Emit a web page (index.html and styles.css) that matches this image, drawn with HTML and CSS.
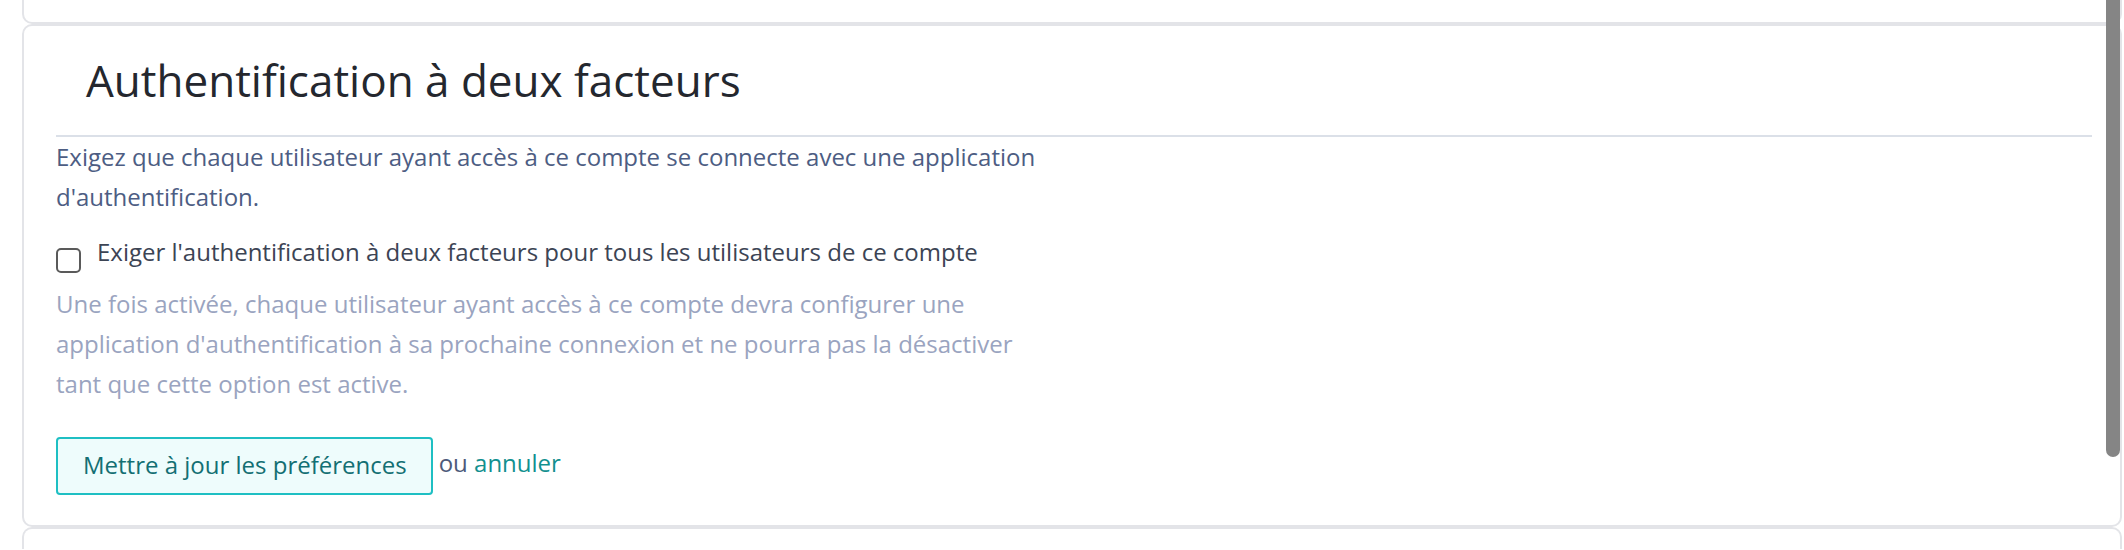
FILE: index.html
```html
<!DOCTYPE html>
<html lang="fr">

<head>
    <meta charset="UTF-8">
    <meta name="viewport" content="width=device-width, initial-scale=1.0">
    <title>Authentification à deux facteurs</title>
    <link rel="stylesheet" href="styles.css">
</head>

<body>

    <div class="page">
        <!-- end of the previous section -->
        <div class="card card-prev"></div>

        <!-- Two factor section -->
        <form class="card" onsubmit="return false">
            <h2 class="card-title">Authentification à deux facteurs</h2>
            <hr class="divider">

            <p class="desc">Exigez que chaque utilisateur ayant accès à ce compte se connecte avec une application d'authentification.</p>

            <div class="check-row">
                <input type="checkbox" id="require-2fa" class="checkbox">
                <label for="require-2fa" class="check-label">Exiger l'authentification à deux facteurs pour tous les utilisateurs de ce compte</label>
            </div>

            <p class="help">Une fois activée, chaque utilisateur ayant accès à ce compte devra configurer une application d'authentification à sa prochaine connexion et ne pourra pas la désactiver tant que cette option est active.</p>

            <div class="actions">
                <button type="submit" class="btn">Mettre à jour les préférences</button>
                <span class="or">ou <a href="#" class="cancel">annuler</a></span>
            </div>
        </form>

        <!-- start of the next section -->
        <div class="card card-next"></div>
    </div>

    <div class="scroll-thumb"></div>

</body>

</html>
```

FILE: styles.css
```css
html,
body {
    margin: 0;
    height: 550px;
    overflow: hidden;
    background-color: #fff;
}

body {
    font-family: "Open Sans", "Liberation Sans", sans-serif;
    font-size: 24px;
    line-height: 40px;
}

.page {
    padding: 0 2px 0 22px;
}

.card {
    display: block;
    border: 2px solid #e3e4e8;
    border-radius: 10px;
    padding: 28px 28px 30px 32px;
    background-color: #fff;
}

.card-prev {
    height: 22px;
    padding: 0;
    border-top: none;
    border-radius: 0 0 10px 10px;
}

.card-next {
    height: 20px;
    padding: 0;
    border-bottom: none;
    border-radius: 10px 10px 0 0;
}

.card-title {
    margin: 0 0 29px 30px;
    font-size: 44px;
    line-height: 52px;
    font-weight: 400;
    color: #24272e;
}

.divider {
    margin: 0;
    border: none;
    height: 2px;
    background-color: #dbe0e8;
}

.desc,
.help {
    max-width: 1000px;
    margin: 0;
}

.desc {
    color: #4d5d83;
    margin-bottom: 15px;
}

.check-row {
    display: flex;
    align-items: flex-start;
    gap: 16px;
}

.checkbox {
    appearance: none;
    -webkit-appearance: none;
    width: 25px;
    height: 25px;
    margin: 16px 0 0 0;
    border: 2px solid #5a5a5a;
    border-radius: 5px;
    background-color: #fff;
    flex-shrink: 0;
}

.check-label {
    color: #3c4454;
}

.help {
    margin-top: 11px;
    color: #9aa4c0;
}

.actions {
    display: flex;
    align-items: center;
    gap: 6px;
    margin-top: 33px;
}

.btn {
    font-family: inherit;
    font-size: 24px;
    line-height: 40px;
    color: #136f73;
    background-color: #eefcfc;
    border: 2px solid #1ebfc3;
    border-radius: 4px;
    padding: 6px 24px 8px 25px;
    cursor: pointer;
}

.or {
    color: #4d5a7a;
    margin-bottom: 6px;
}

.cancel {
    color: #12908f;
    text-decoration: none;
}

.scroll-thumb {
    position: fixed;
    top: -10px;
    right: 4px;
    width: 14px;
    height: 467px;
    border-radius: 7px;
    background-color: #858585;
}
```
